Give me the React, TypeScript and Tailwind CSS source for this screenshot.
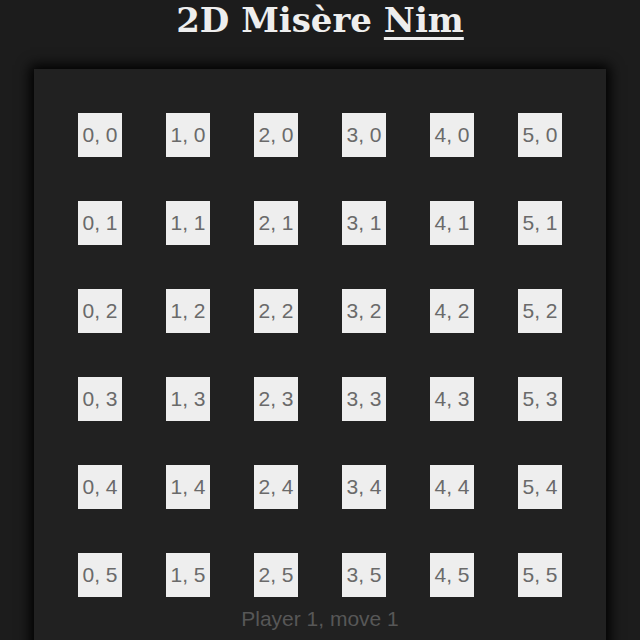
const cols = [0, 1, 2, 3, 4, 5];
const rows = [0, 1, 2, 3, 4, 5];

const Cell = ({ x, y }: { x: number; y: number }) => (
  <div className="w-[88px] h-[88px] flex items-center justify-center">
    <div className="w-[44px] h-[44px] bg-[#eeeeee] text-[#6a6a6a] text-[21px] flex items-center justify-center">
      {x}, {y}
    </div>
  </div>
);

export default function App() {
  return (
    <div className="min-h-[640px] h-[640px] overflow-hidden bg-[#1c1c1c] flex flex-col items-center font-['Liberation_Sans',Arial,sans-serif]">
      <h1 className="mt-0 text-[34px] leading-[40px] font-bold text-[#eeeeee] font-['DejaVu_Serif',serif]">
        2D Misère <span className="underline decoration-[3px] underline-offset-[5px]">Nim</span>
      </h1>
      <div className="mt-[29px] w-[572px] bg-[#212121] shadow-[0_0_12px_4px_#000] p-[22px] pb-0">
        <div className="flex flex-col">
          {rows.map((y) => (
            <div key={y} className="flex">
              {cols.map((x) => (
                <Cell key={x} x={x} y={y} />
              ))}
            </div>
          ))}
        </div>
        <p className="text-center text-[21px] leading-[24px] text-[#575757] -mt-[12px] pb-6">Player 1, move 1</p>
      </div>
    </div>
  );
}
